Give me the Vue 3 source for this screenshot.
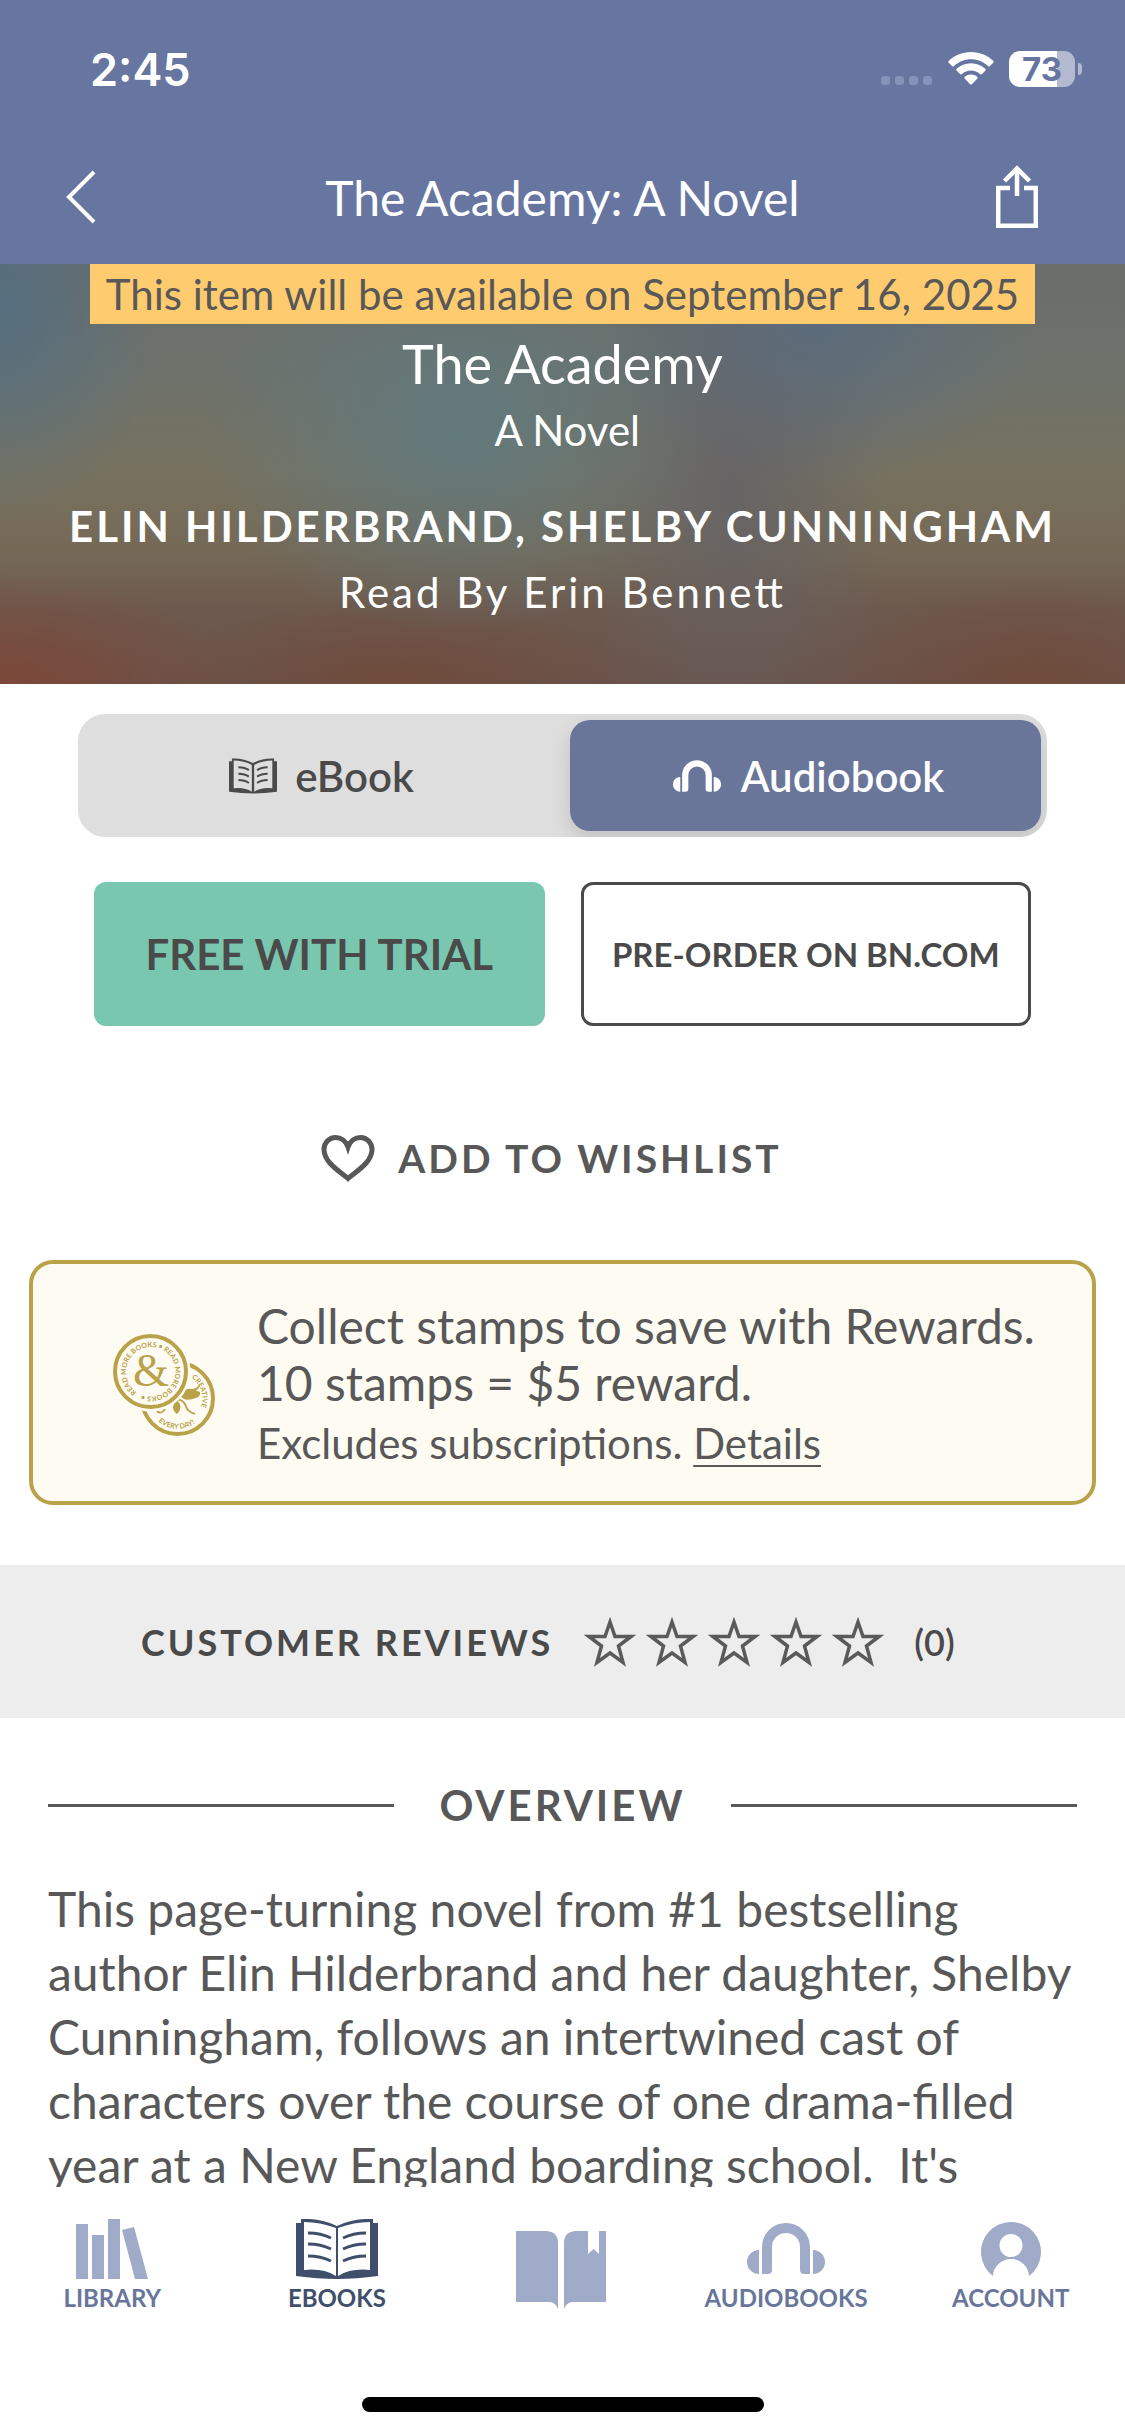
<template>
  <div class="screen">
    <header class="top-bar">
      <div class="status">
        <span class="time">2:45</span>
        <div class="status-icons">
          <svg class="signal" width="52" height="36" viewBox="0 0 52 36" fill="#8592ba" aria-hidden="true">
            <rect v-for="n in 4" :key="n" :x="(n - 1) * 14" y="25" width="9" height="9" rx="3" />
          </svg>
          <svg width="46" height="36" viewBox="0 0 46 36" fill="#fff" aria-hidden="true">
            <path d="M23 1C14 1 6 4.500 .8 9.800q-1 1 0 2l3.200 3.200q1 1 2 0C10.500 10.800 16.500 8.200 23 8.200s12.500 2.600 17 6.800q1 1 2 0l3.200-3.200q1-1 0-2C40 4.500 32 1 23 1z" />
            <path d="M23 12.200c-5.600 0-10.600 2.100-14.300 5.600q-1 1 0 2l3.300 3.200q1 1 2 .1c2.400-2.200 5.600-3.500 9-3.500s6.600 1.300 9 3.500q1 .9 2-.1l3.300-3.200q1-1 0-2C33.600 14.300 28.600 12.200 23 12.200z" />
            <path d="M23 23.500c-2.400 0-4.500.9-6.200 2.300q-1 .9 0 1.900l5.100 5.300q1.100 1.100 2.200 0l5.100-5.300q1-1 0-1.900C27.500 24.400 25.400 23.500 23 23.500z" />
          </svg>
          <div class="battery">
            <span class="level">73</span>
            <span class="nub"></span>
          </div>
        </div>
      </div>
      <div class="nav-row">
        <button type="button" class="icon-btn" aria-label="Back">
          <svg width="32" height="54" viewBox="0 0 32 54" fill="none" stroke="#fff" stroke-width="4"><path d="M29 2 4 27l25 25" /></svg>
        </button>
        <span class="nav-title">The Academy: A Novel</span>
        <button type="button" class="icon-btn" aria-label="Share">
          <svg width="42" height="64" viewBox="0 0 42 64" fill="none" stroke="#fff" stroke-width="4.500"><path d="M14 23H2.200v37.700h37.600V23H28" /><path d="M21 31V4M8.500 16 21 3.500 33.500 16" /></svg>
        </button>
      </div>
    </header>

    <main class="content">
      <section class="hero">
        <p class="notice">This item will be available on September 16, 2025</p>
        <h1>The Academy</h1>
        <p class="subtitle">&nbsp;A Novel</p>
        <p class="authors">ELIN HILDERBRAND, SHELBY CUNNINGHAM</p>
        <p class="narrator">Read By Erin Bennett</p>
      </section>

      <div class="formats">
        <button type="button" :class="{ selected: format === 'ebook' }" :aria-pressed="format === 'ebook'" @click="format = 'ebook'">
          <svg width="48" height="36" viewBox="0 0 82 60" aria-hidden="true">
            <path fill="currentColor" d="M0 5h5V0q20-1 36 8Q57-1 77 0v5h5v52q-22 3-41 3T0 57z" />
            <path fill="#dedede" d="M8 3.500q17 0 31 7.500v46q-12-8-31-6zM74 3.500q-17 0-31 7.500v46q12-8 31-6z" />
            <path fill="none" stroke="currentColor" stroke-width="3.500" d="M16 15q11 0 18 5M16 26q11 0 18 5M16 37q11 0 18 5M66 15q-11 0-18 5M66 26q-11 0-18 5M66 37q-11 0-18 5" />
          </svg>
          <span>eBook</span>
        </button>
        <button type="button" :class="{ selected: format === 'audiobook' }" :aria-pressed="format === 'audiobook'" @click="format = 'audiobook'">
          <svg width="52" height="32" viewBox="0 0 84 51" fill="currentColor" aria-hidden="true">
            <path d="M18 51V24a24 24 0 0 1 48 0v27h-6q-4 0-4-4V24a14 14 0 0 0-28 0v23q0 4-4 4zM15 27v24a12 12 0 0 1 0-24zM69 27v24a12 12 0 0 0 0-24z" />
          </svg>
          <span>Audiobook</span>
        </button>
      </div>

      <div class="actions">
        <button type="button" class="trial">FREE WITH TRIAL</button>
        <button type="button" class="preorder">PRE-ORDER ON BN.COM</button>
      </div>

      <button type="button" class="wishlist">
        <svg width="54" height="47" viewBox="0 0 54 47" fill="none" stroke="currentColor" stroke-width="5" aria-hidden="true">
          <path d="M27 43.500C20 37 3 28 3 14.500 3 8 8 2.500 14.500 2.500 20 2.500 25 6 27 12c2-6 7-9.500 12.500-9.500C46 2.500 51 8 51 14.500 51 28 34 37 27 43.500z" />
        </svg>
        <span>ADD TO WISHLIST</span>
      </button>

      <section class="rewards">
        <svg class="stamps" width="102" height="102" viewBox="0 0 102 102" aria-hidden="true">
          <defs>
            <path id="ring-read" d="M23.400 58.200a25 25 0 0 1 28.600-41a25 25 0 0 1-28.600 41" />
            <path id="ring-creative" d="M78.400 43.800A25 25 0 0 1 86 77" />
            <path id="ring-every" d="M45.400 87.600A30 30 0 0 0 86 85.800" />
          </defs>
          <circle cx="64.500" cy="64.500" r="35.500" fill="none" stroke="#b9a24a" stroke-width="4" />
          <path fill="#b9a24a" d="M67 62q4-9 12-7l8 3q1 4-4 6-8 3-12 1zM79 55q4 0 7-4l1 1q-2 4-5 5zM64 66q7 7 0 14-8-6 0-14z" />
          <path fill="none" stroke="#b9a24a" stroke-width="1.800" d="M58 67q10-4 14 3 2 8 10 10M44 77q4 4 8-2" />
          <circle cx="37.500" cy="37.500" r="40" fill="#fefbf2" />
          <circle cx="37.500" cy="37.500" r="35.500" fill="none" stroke="#b9a24a" stroke-width="4" />
          <text class="amp" x="38" y="52" text-anchor="middle">&amp;</text>
          <text class="ring"><textPath href="#ring-read">READ MORE BOOKS • READ MORE BOOKS •</textPath></text>
          <text class="ring"><textPath href="#ring-creative">CREATIVE</textPath></text>
          <text class="ring"><textPath href="#ring-every">EVERY DAY!</textPath></text>
        </svg>
        <div class="rewards-text">
          <p>Collect stamps to save with Rewards.</p>
          <p>10 stamps = $5 reward.</p>
          <p class="small">Excludes subscriptions. <a href="#">Details</a></p>
        </div>
      </section>

      <section class="reviews">
        <h2>CUSTOMER REVIEWS</h2>
        <div class="stars" role="img" aria-label="0 out of 5 stars">
          <svg v-for="n in 5" :key="n" width="52" height="52" viewBox="0 0 52 52" fill="none" stroke="#5a5a5a" stroke-width="3.500">
            <path d="M26 6l5 14.500h16L34.500 30 39 46.500 26 37 13 46.500 17.500 30 5 20.500h16z" />
          </svg>
        </div>
        <span class="count">(0)</span>
      </section>

      <section class="overview">
        <h2>OVERVIEW</h2>
        <p>This page-turning novel from #1 bestselling author Elin Hilderbrand and her daughter, Shelby Cunningham, follows an intertwined cast of characters over the course of one drama-filled year at a New England boarding school. &nbsp;It's</p>
      </section>
    </main>

    <nav class="tab-bar">
      <div class="tabs">
        <a href="#">
          <svg width="72" height="60" viewBox="0 0 72 60" fill="#9fabc8" aria-hidden="true">
            <path d="M0 5h12v55H0zM16 16h12v44H16zM32 0h12v60H32zM46 11l12-3 14 52H59z" />
          </svg>
          <span>LIBRARY</span>
        </a>
        <a href="#" class="current" aria-current="page">
          <svg width="82" height="60" viewBox="0 0 82 60" aria-hidden="true">
            <path fill="#3f4f6b" d="M0 4h5V0q20-1 36 7Q57-1 77 0v4h5v53q-22 3-41 3T0 57z" />
            <path fill="#fff" d="M8 3q16 0 32 6v48q-13-8-32-6zM74 3q-16 0-32 6v48q13-8 32-6z" />
            <path fill="none" stroke="#3f4f6b" stroke-width="3" d="M12 14q13 0 23 5M12 25q13 0 23 5M12 37q13 0 23 5M70 14q-13 0-23 5M70 25q-13 0-23 5M70 37q-13 0-23 5" />
          </svg>
          <span>EBOOKS</span>
        </a>
        <a href="#" class="no-label" aria-label="Now reading">
          <svg width="90" height="78" viewBox="0 0 90 78" fill="#9fabc8" aria-hidden="true">
            <path d="M0 0h31q11 1 11 12v66q-2-6-8-7H0zM59 0h13v23l5.500-5 5.500 5V0h7v71H56q-6 1-8 7V12Q48 1 59 0z" />
          </svg>
        </a>
        <a href="#">
          <svg width="84" height="51" viewBox="0 0 84 51" fill="#9fabc8" aria-hidden="true">
            <path d="M18 51V24a24 24 0 0 1 48 0v27h-6q-4 0-4-4V24a14 14 0 0 0-28 0v23q0 4-4 4zM15 27v24a12 12 0 0 1 0-24zM69 27v24a12 12 0 0 0 0-24z" />
          </svg>
          <span>AUDIOBOOKS</span>
        </a>
        <a href="#">
          <svg width="60" height="54" viewBox="0 0 60 54" fill="#9fabc8" aria-hidden="true">
            <path fill-rule="evenodd" d="M12 54a30 30 0 1 1 36 0c0-9-8-17-18-17s-18 8-18 17zM30 12a11.500 11.500 0 1 0 0 23 11.500 11.500 0 0 0 0-23z" />
          </svg>
          <span>ACCOUNT</span>
        </a>
      </div>
      <div class="home-indicator"></div>
    </nav>
  </div>
</template>

<script setup>
import { ref } from 'vue'

const format = ref('audiobook')
</script>

<style>
body {
  margin: 0;
  background: #fff;
}
</style>

<style scoped>
.screen {
  height: 100vh;
  display: flex;
  flex-direction: column;
  overflow: hidden;
  font-family: Lato, sans-serif;
  color: #585858;
  background: #fff;
}

h1,
h2,
p {
  margin: 0;
}

button {
  font-family: inherit;
  border: 0;
  padding: 0;
  background: none;
  color: inherit;
  cursor: pointer;
}

.top-bar {
  background: #6775a1;
  color: #fff;
  flex: none;
}

.status {
  height: 138px;
  padding: 0 43px 0 90px;
  display: flex;
  align-items: center;
  justify-content: space-between;
}

.time {
  font-family: Inter, sans-serif;
  font-size: 45px;
  font-weight: 600;
}

.status-icons {
  display: flex;
  align-items: center;
  gap: 15px;
}

.battery {
  display: flex;
  align-items: center;
  gap: 3px;
}

.level {
  width: 66px;
  height: 36px;
  border-radius: 11px;
  background: linear-gradient(90deg, #fff 73%, #b3bad0 73%);
  color: #6775a1;
  font-family: Inter, sans-serif;
  font-size: 33px;
  font-weight: 700;
  line-height: 36px;
  text-align: center;
}

.nub {
  width: 4px;
  height: 12px;
  border-radius: 0 4px 4px 0;
  background: #b3bad0;
}

.nav-row {
  height: 126px;
  padding: 0 87px 8px 65px;
  box-sizing: border-box;
  display: grid;
  grid-template-columns: 64px 1fr 42px;
  align-items: center;
}

.icon-btn {
  display: flex;
}

.nav-title {
  font-size: 48px;
  text-align: center;
}

.content {
  flex: 1;
  min-height: 0;
  overflow: hidden;
}

.hero {
  padding-bottom: 66px;
  color: #fff;
  text-align: center;
  background:
    radial-gradient(ellipse 160px 220px at 0 40px, rgba(80, 110, 132, 0.8), transparent),
    radial-gradient(ellipse 220px 160px at 73% 60px, rgba(88, 107, 128, 0.8), transparent),
    radial-gradient(ellipse 260px 200px at 41% 170px, rgba(96, 122, 128, 0.9), transparent),
    radial-gradient(ellipse 160px 280px at 65% 220px, rgba(100, 98, 102, 0.9), transparent),
    radial-gradient(ellipse 240px 110px at 0 100%, rgba(126, 70, 54, 0.9), transparent),
    radial-gradient(ellipse 240px 90px at 35% 100%, rgba(112, 74, 58, 0.9), transparent),
    radial-gradient(ellipse 200px 110px at 92% 100%, rgba(112, 74, 58, 0.9), transparent),
    linear-gradient(#6a6d6a, #6d726b 25%, #77725f 50%, #756956 68%, #6d5a4e 82%, #6a534b);
}

.notice {
  width: fit-content;
  margin: 0 auto;
  padding: 0 16px;
  background: #fecb6e;
  color: #585858;
  font-size: 42px;
  line-height: 60px;
}

h1 {
  margin-top: 8px;
  font-size: 54px;
  font-weight: 400;
  line-height: 64px;
}

.subtitle {
  margin-top: 8px;
  font-size: 42px;
  line-height: 52px;
}

.authors {
  margin-top: 44px;
  font-size: 42px;
  font-weight: 700;
  line-height: 52px;
  letter-spacing: 3px;
}

.narrator {
  margin-top: 14px;
  font-size: 42px;
  line-height: 52px;
  letter-spacing: 3px;
  font-feature-settings: 'liga' 1;
}

.formats {
  margin: 30px 78px 0;
  padding: 6px;
  display: grid;
  grid-template-columns: 1fr 1fr;
  gap: 15px;
  border-radius: 27px;
  background: #dedede;
  overflow: hidden;
}

.formats button {
  height: 111px;
  padding-left: 4px;
  border-radius: 20px;
  display: flex;
  align-items: center;
  justify-content: center;
  gap: 18px;
  font-size: 42px;
  font-weight: 600;
  color: #4a4a4a;
}

.formats .selected {
  background: #69769a;
  color: #fff;
  box-shadow: 0 8px 20px rgba(0, 0, 0, 0.13);
}

.actions {
  margin: 45px 94px 0;
  display: grid;
  grid-template-columns: 1fr 1fr;
  gap: 36px;
}

.actions button {
  height: 144px;
  border-radius: 12px;
  font-weight: 700;
  color: #4a4a4a;
}

.actions .trial {
  background: #7ac7af;
  font-size: 42px;
}

.actions .preorder {
  border: 3px solid #4a4a4a;
  font-size: 33px;
}

.wishlist {
  margin: 102px auto 0;
  padding-right: 22px;
  height: 60px;
  display: flex;
  align-items: center;
  gap: 23px;
  font-size: 39px;
  font-weight: 700;
  letter-spacing: 3px;
}

.rewards {
  margin: 72px 29px 0;
  padding: 33px 20px 28px 80px;
  display: flex;
  align-items: center;
  gap: 42px;
  border: 4px solid #b9a24a;
  border-radius: 24px;
  background: #fefbf2;
}

.stamps {
  flex: none;
}

.ring {
  font-size: 7px;
  font-weight: 700;
  fill: #b9a24a;
}

.amp {
  font-family: 'Liberation Serif', serif;
  font-size: 46px;
  fill: #b9a24a;
}

.rewards-text {
  font-size: 48px;
  line-height: 57px;
}

.rewards-text .small {
  margin-top: 2px;
  font-size: 42px;
  line-height: 60px;
}

.rewards-text a {
  color: inherit;
  text-decoration: underline;
  text-decoration-thickness: 2px;
  text-underline-offset: 6px;
}

.reviews {
  margin-top: 60px;
  height: 153px;
  padding-left: 141px;
  display: flex;
  align-items: center;
  background: #ededed;
  color: #4a4a4a;
}

.reviews h2 {
  font-size: 36px;
  font-weight: 700;
  letter-spacing: 3px;
}

.stars {
  margin-left: 31px;
  display: flex;
  gap: 10px;
}

.count {
  margin-left: 30px;
  font-size: 36px;
  font-weight: 600;
}

.overview {
  padding: 60px 48px 0;
}

.overview h2 {
  display: flex;
  align-items: center;
  gap: 45px;
  font-size: 42px;
  font-weight: 700;
  line-height: 54px;
  letter-spacing: 3px;
}

.overview h2::before,
.overview h2::after {
  content: '';
  flex: 1;
  height: 3px;
  background: #585858;
}

.overview p {
  margin-top: 45px;
  font-size: 48px;
  line-height: 64px;
}

.tab-bar {
  flex: none;
  height: 249px;
  box-sizing: border-box;
  padding-bottom: 24px;
  display: flex;
  flex-direction: column;
  justify-content: space-between;
  align-items: center;
  background: #fff;
}

.tabs {
  width: 100%;
  padding: 27px 2px 0 0;
  box-sizing: border-box;
  display: grid;
  grid-template-columns: repeat(5, 1fr);
}

.tabs a {
  height: 99px;
  display: flex;
  flex-direction: column;
  align-items: center;
  color: #69769c;
  font-size: 24px;
  font-weight: 700;
  line-height: 30px;
  text-decoration: none;
}

.tabs a svg {
  margin: auto 0;
}

.tabs .no-label {
  padding-top: 6px;
}

.tabs .current {
  color: #3f4f6b;
}

.home-indicator {
  width: 402px;
  height: 15px;
  border-radius: 8px;
  background: #000;
}
</style>
